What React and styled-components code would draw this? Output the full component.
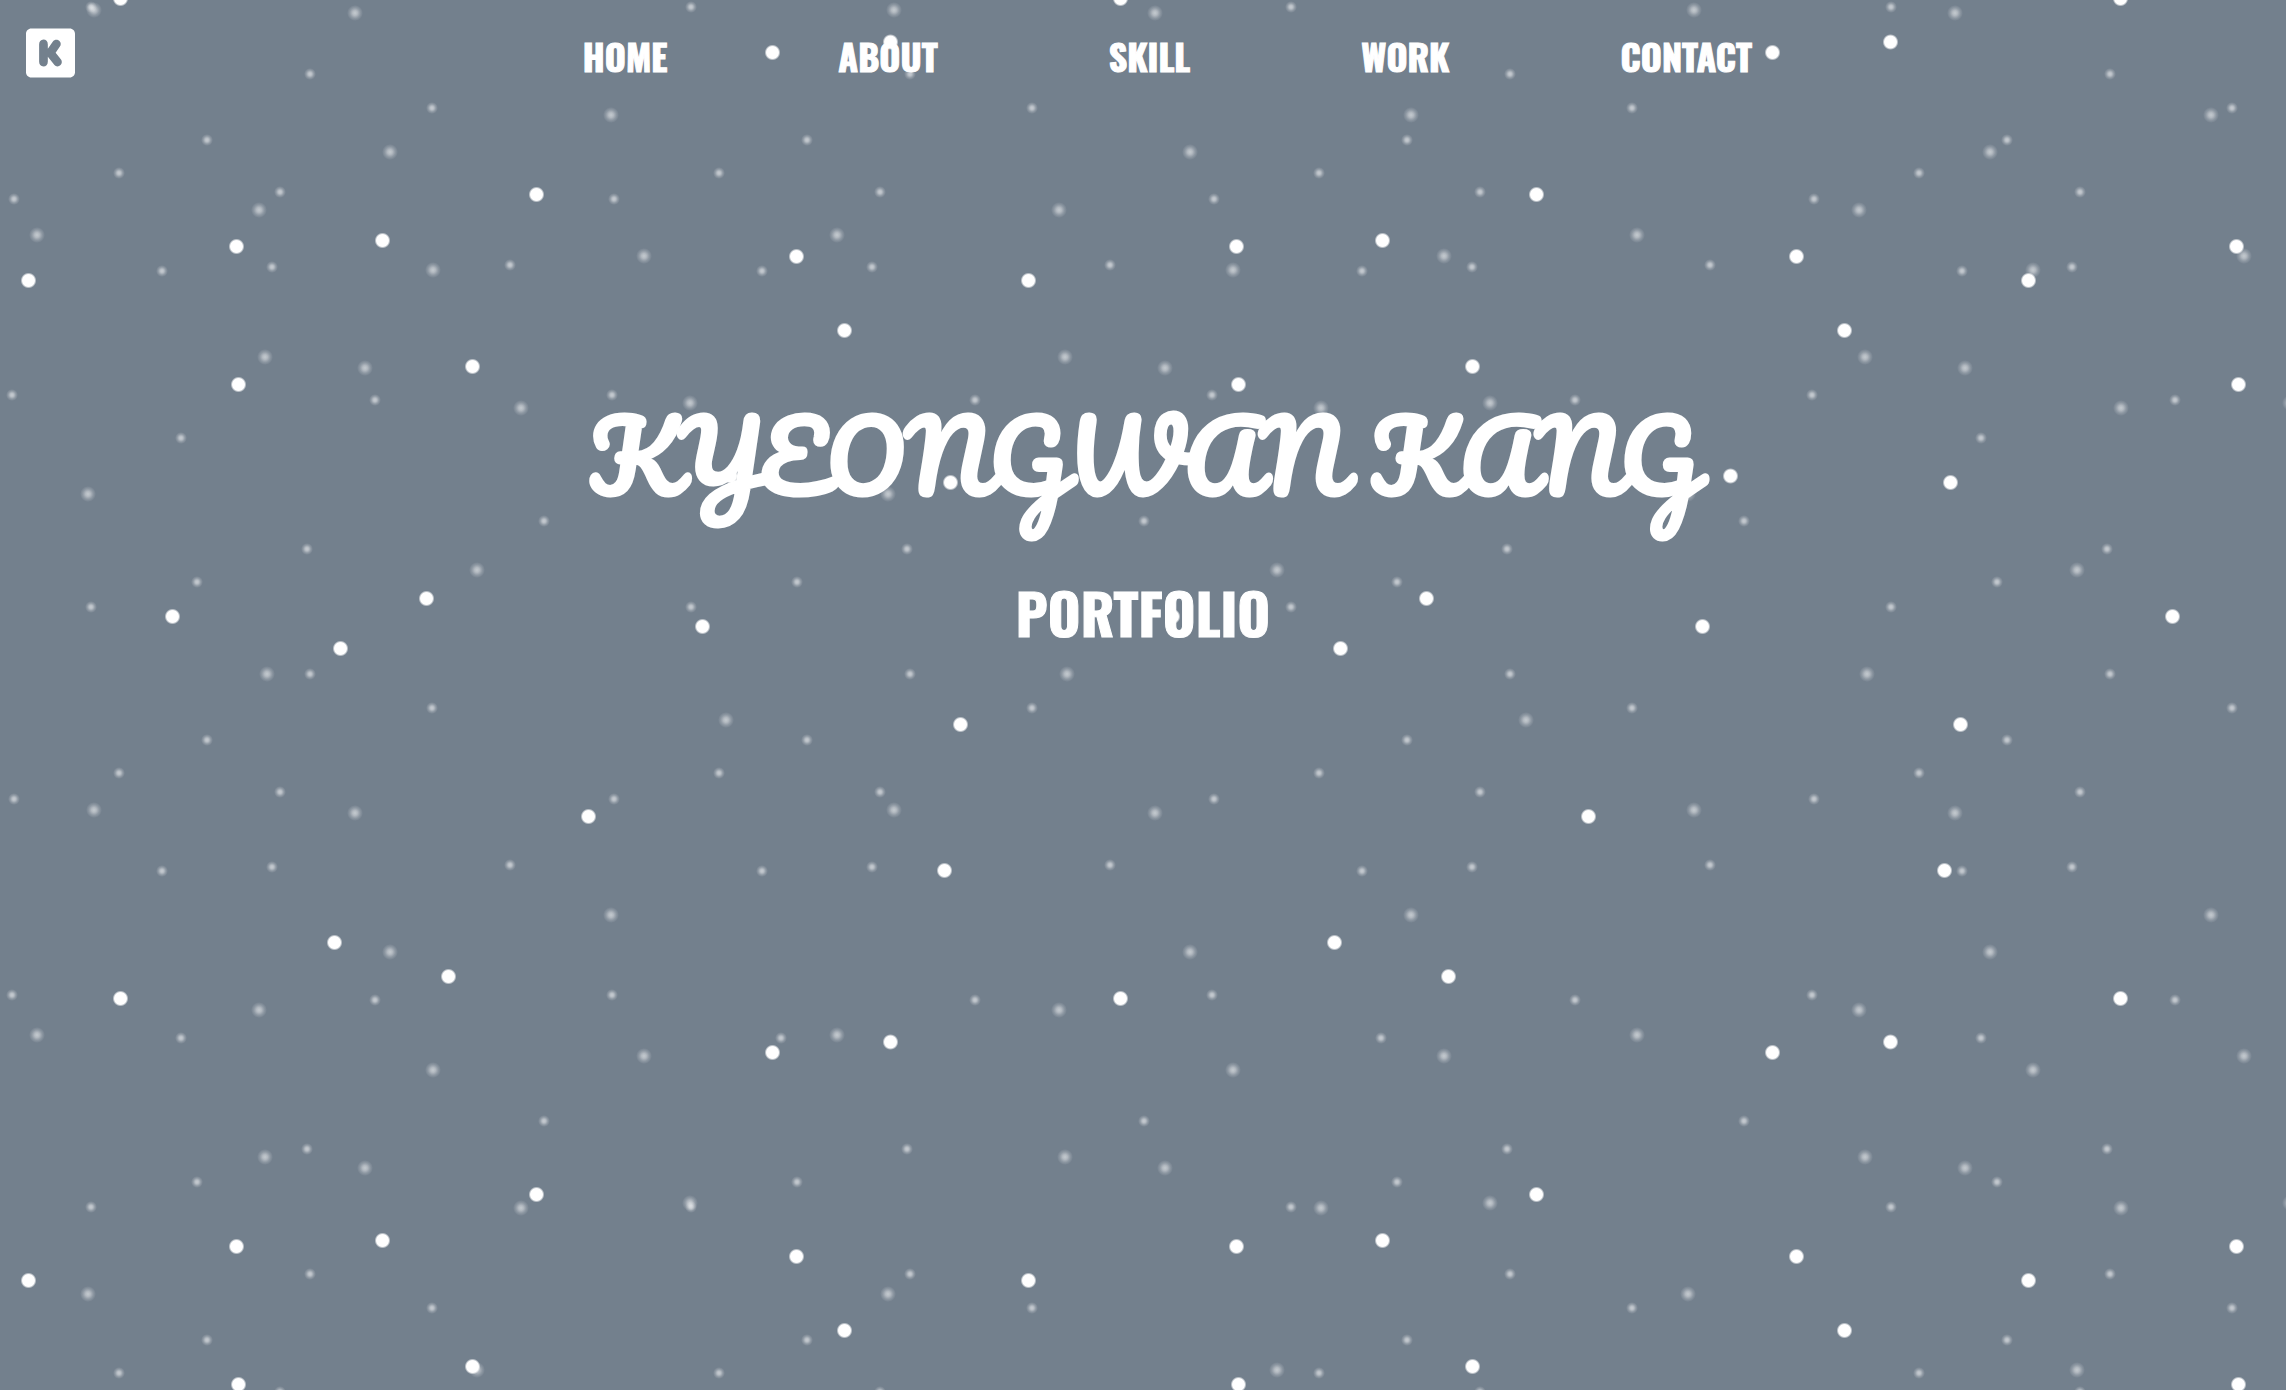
import React from 'react';
import styled, { createGlobalStyle } from 'styled-components';
import { FaKickstarter } from 'react-icons/fa';

const GlobalStyle = createGlobalStyle`
  * { box-sizing: border-box; }
  body {
    margin: 0;
    background: #73808d;
    color: #fff;
    font-family: 'Oswald', 'Roboto Condensed', 'Liberation Sans', sans-serif;
  }
`;

const Page = styled.div`
  position: relative;
  min-height: 100vh;
  overflow: hidden;
`;

const SnowField = styled.svg`
  position: absolute;
  inset: 0;
  width: 100%;
  height: 100%;
`;

const Header = styled.header`
  position: relative;
  display: flex;
  align-items: center;
  height: 106px;
  padding: 0 26px;
`;

const LogoLink = styled.a`
  display: flex;
  color: inherit;

  svg {
    width: 49px;
    height: 56px;
  }
`;

const Nav = styled.nav`
  flex: 1;
`;

const Menu = styled.ul`
  display: flex;
  justify-content: center;
  gap: 171px;
  margin: 0;
  padding: 6px 0 0;
  list-style: none;
`;

const MenuLink = styled.a`
  color: inherit;
  font-size: 36px;
  font-weight: 700;
  line-height: 56px;
  text-decoration: none;
  -webkit-text-stroke: 1px #fff;
`;

const Hero = styled.main`
  position: relative;
  display: flex;
  flex-direction: column;
  align-items: center;
  padding-top: 264px;
`;

const Name = styled.h1`
  margin: 0;
  font-family: 'Pacifico', 'Lobster', cursive;
  font-size: 96px;
  font-weight: 700;
  line-height: 170px;
`;

const Subtitle = styled.h2`
  margin: 30px 0 0;
  font-size: 56px;
  font-weight: 700;
  line-height: 84px;
  -webkit-text-stroke: 1px #fff;
`;

const LAYERS = [
  {
    id: 'far',
    tile: 600,
    radius: 6,
    stops: [[0, 0.6], [0.3, 0.5], [0.65, 0.2], [1, 0]],
    flakes: [
      [91, 7], [310, 74], [432, 108], [207, 140], [119, 173], [14, 199], [280, 192],
      [162, 271], [272, 267], [510, 265], [12, 395], [375, 400], [181, 438],
      [544, 521], [307, 549], [197, 582],
    ],
  },
  {
    id: 'middle',
    tile: 800,
    radius: 8,
    stops: [[0, 0.58], [0.3, 0.46], [0.65, 0.19], [1, 0]],
    flakes: [
      [94, 10], [355, 13], [611, 115], [390, 152], [259, 210], [37, 235], [644, 256],
      [433, 270], [265, 357], [365, 368], [690, 403], [521, 408], [88, 494],
      [477, 570], [267, 674], [726, 720],
    ],
  },
  {
    id: 'near',
    tile: 1000,
    radius: 8,
    stops: [[0, 1], [0.74, 1], [1, 0]],
    flakes: [
      [120.5, -1.5], [120.5, 998.5], [890.5, 42], [772.5, 52.5], [536.5, 194.5],
      [382.5, 240.5], [236.5, 246.5], [796.5, 256.5], [28.5, 280.5], [844.5, 330.5],
      [472.5, 366.5], [238.5, 384.5], [730.5, 476], [950.5, 482.5], [426.5, 598.5],
      [172.5, 616.5], [702.5, 626.5], [340.5, 648.5], [960.5, 724.5], [588.5, 816.5],
      [944.5, 870.5], [334.5, 942.5], [448.5, 976.5],
    ],
  },
];

function Snow() {
  return (
    <SnowField aria-hidden="true">
      <defs>
        {LAYERS.map(({ id, tile, radius, stops, flakes }) => (
          <React.Fragment key={id}>
            <radialGradient id={`${id}-flake`}>
              {stops.map(([offset, opacity]) => (
                <stop key={offset} offset={offset} stopColor="#fff" stopOpacity={opacity} />
              ))}
            </radialGradient>
            <pattern id={`${id}-layer`} width={tile} height={tile} patternUnits="userSpaceOnUse">
              {flakes.map(([x, y]) => (
                <circle key={`${x}-${y}`} cx={x} cy={y} r={radius} fill={`url(#${id}-flake)`} />
              ))}
            </pattern>
          </React.Fragment>
        ))}
      </defs>
      {LAYERS.map(({ id }) => (
        <rect key={id} width="100%" height="100%" fill={`url(#${id}-layer)`} />
      ))}
    </SnowField>
  );
}

const MENU = ['HOME', 'ABOUT', 'SKILL', 'WORK', 'CONTACT'];

export default function App() {
  return (
    <Page>
      <GlobalStyle />
      <Snow />
      <Header>
        <LogoLink href="#home" aria-label="Home">
          <FaKickstarter />
        </LogoLink>
        <Nav>
          <Menu>
            {MENU.map((label) => (
              <li key={label}>
                <MenuLink href={`#${label.toLowerCase()}`}>{label}</MenuLink>
              </li>
            ))}
          </Menu>
        </Nav>
      </Header>
      <Hero>
        <Name>KYEONGWAN KANG</Name>
        <Subtitle>PORTFOLIO</Subtitle>
      </Hero>
    </Page>
  );
}
